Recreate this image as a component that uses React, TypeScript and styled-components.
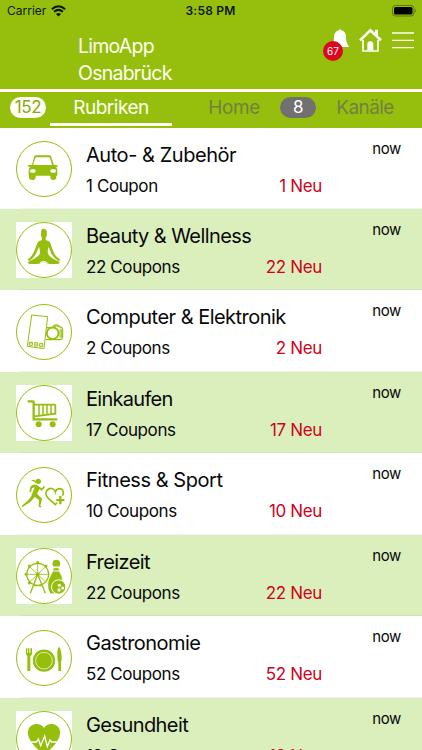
import React from 'react';
import styled, { createGlobalStyle } from 'styled-components';

const GREEN = '#96bf0d';
const RED = '#d0021b';

const Global = createGlobalStyle`
  * { box-sizing: border-box; }
  html, body { margin: 0; padding: 0; background: #fff; overflow: hidden; }
  body { font-family: Inter, "Liberation Sans", sans-serif; color: #080808; }
`;

const Screen = styled.div`
  width: 422px;
  height: 750px;
  overflow: hidden;
  display: flex;
  flex-direction: column;
  background: #fff;
`;

const Header = styled.header`
  flex: none;
  height: 89px;
  background: ${GREEN};
  display: flex;
  flex-direction: column;
`;

const StatusBar = styled.div`
  height: 22px;
  padding: 0 5px 0 7px;
  display: grid;
  grid-template-columns: 1fr auto 1fr;
  align-items: center;
  color: #10150a;
  font-size: 12px;
  line-height: 22px;
`;

const Carrier = styled.div`
  display: flex;
  align-items: center;
  gap: 5px;
  letter-spacing: 0;
`;

const Clock = styled.div`
  font-weight: 600;
  letter-spacing: 0.2px;
  margin-right: 3px;
`;

const Battery = styled.svg`
  justify-self: end;
  display: block;
`;

const TitleBar = styled.div`
  flex: 1;
  display: flex;
  justify-content: space-between;
  padding: 11px 8px 0 78px;
`;

const AppTitle = styled.h1`
  margin: 0;
  font-size: 19.5px;
  line-height: 27px;
  font-weight: 400;
  letter-spacing: -0.75px;
  color: #fffff2;
`;

const Actions = styled.div`
  display: flex;
  align-items: flex-start;
`;

const BellButton = styled.div`
  position: relative;
  width: 30px;
  height: 36px;
  margin-top: -5px;
`;

const BellBadge = styled.span`
  position: absolute;
  left: 0;
  top: 13px;
  width: 20px;
  height: 20px;
  border-radius: 50%;
  background: #dc0720;
  color: #fff;
  font-size: 10px;
  line-height: 20px;
  text-align: center;
`;

const ActionIcon = styled.svg<{ $left: number; $top: number }>`
  display: block;
  margin-left: ${(p) => p.$left}px;
  margin-top: ${(p) => p.$top}px;
`;

const Tabs = styled.nav`
  flex: none;
  height: 38.5px;
  border-top: 3px solid #fffff6;
  background: ${GREEN};
  display: flex;
  padding-left: 10px;
`;

const Pill = styled.span<{ $dark?: boolean; $left?: number }>`
  width: 36px;
  height: 21px;
  margin: 5px 0 0 ${(p) => p.$left ?? 0}px;
  border-radius: 11px;
  background: ${(p) => (p.$dark ? '#717171' : '#fffff4')};
  color: ${(p) => (p.$dark ? '#fff' : '#86a81b')};
  font-size: 17px;
  line-height: 21px;
  text-align: center;
  letter-spacing: -0.3px;
`;

const Tab = styled.span<{ $active?: boolean; $width: number; $left: number; $ls: number }>`
  width: ${(p) => p.$width}px;
  height: 34px;
  margin-left: ${(p) => p.$left}px;
  border-bottom: 3px solid ${(p) => (p.$active ? '#fffff4' : 'transparent')};
  color: ${(p) => (p.$active ? '#fffff2' : '#75803f')};
  font-size: 19px;
  line-height: 31px;
  text-align: center;
  letter-spacing: ${(p) => p.$ls}px;
`;

const List = styled.main`
  flex: 1;
  min-height: 0;
  overflow: hidden;
`;

const Row = styled.article<{ $tinted: boolean }>`
  height: 81.45px;
  padding: 13.5px 21px 0 16px;
  display: grid;
  grid-template-columns: 56px 236px 1fr;
  column-gap: 14px;
  background: linear-gradient(rgba(90, 110, 80, 0.09), rgba(90, 110, 80, 0.09)) 21px 100% / 100% 1px no-repeat
    ${(p) => (p.$tinted ? '#dbefbd' : '#fff')};
`;

const IconTile = styled.svg`
  display: block;
  width: 56px;
  height: 56px;
  background: #fff;
`;

const Info = styled.div`
  display: flex;
  flex-direction: column;
  padding-top: 0.5px;
`;

const RowTitle = styled.h2<{ $ls: number }>`
  margin: 0;
  font-size: 20px;
  line-height: 27px;
  font-weight: 400;
  white-space: nowrap;
  letter-spacing: ${(p) => p.$ls}px;
`;

const Counts = styled.div`
  display: flex;
  justify-content: space-between;
  margin-top: 5px;
  font-size: 17px;
  line-height: 24px;
  letter-spacing: -0.4px;
`;

const NewCount = styled.span`
  color: ${RED};
  letter-spacing: -0.35px;
`;

const Time = styled.time`
  justify-self: end;
  margin-top: -2.4px;
  font-size: 15px;
  line-height: 20px;
  letter-spacing: -0.4px;
`;

const Car = () => (
  <g>
    <path fillRule="evenodd" d="M55 45 Q57 43 60 43 H100 Q104 43 106 47 L113 71 L125 73 Q127 78 121 79 Q125 84 124 92 V104 H121 V112 Q120 117 111 117 Q104 117 103 110 V104 H59 V110 Q58 117 49 117 Q40 117 39 111 V104 H38 V91 Q37 84 42 79 Q34 78 35 73 L48 71 Z M58 50 L51 72 H108 L102 50 Q101 49 99 49 H61 Q59 49 58 50 Z" />
    <rect x="42" y="85" width="17" height="10" rx="5" fill="#fff" />
    <rect x="103" y="85" width="17" height="10" rx="5" fill="#fff" />
  </g>
);

const Yoga = () => (
  <g>
    <path d="M76 25 Q77 20 83 20 Q90 20 91 26 Q95 28 92 32 Q94 43 89 48 V54 L97 57 Q102 59 104 66 L110 84 Q116 101 127 109 L133 113 Q132 117 127 116 Q112 108 105 93 L98 74 Q95 83 95 91 Q97 102 109 109 L130 119 Q133 126 120 126 H103 Q92 125 83 119 Q75 125 63 126 H46 Q33 126 37 119 L57 109 Q70 102 72 92 Q72 84 69 74 L61 93 Q54 108 40 117 Q36 116 35 112 L41 108 Q51 98 56 85 L63 66 Q65 59 70 57 L78 54 V48 Q73 43 75 33 Z" />
    <path d="M72 122 Q83 113 94 122" stroke="#fff" strokeWidth="3" fill="none" />
  </g>
);

const Computer = () => (
  <g fill="none" stroke={GREEN} strokeWidth="3">
    <path d="M88 71 L110 71 L112 66 Q123 58 130 68 L136 70 Q140 73 140 79 V100 Q140 106 134 107 L90 107" strokeWidth="3.5" />
    <path d="M115 69 Q121 63 127 69" />
    <rect x="132" y="76" width="4" height="25" rx="2" />
    <circle cx="110" cy="88" r="17.5" strokeWidth="5.5" fill="#fff" />
    <path d="M47 33 L95 38 L84 134 L34 127 Z" fill="#fff" />
    <path d="M40 115 h9 v9 h-9z M56 116 h9 v10 h-9z M71 118 h9 v10 h-9z" />
    <path d="M43 119 h3 M59 121 h3 M74 123 h3" />
  </g>
);

const Cart = () => (
  <g fill="none" stroke={GREEN}>
    <path d="M35 49 H50 Q53 49 53 52 V103 H124" strokeWidth="7" />
    <path d="M54 59 H116 Q118 59 118 62 V86 L55 94" strokeWidth="5.5" />
    <path d="M69 59 V92 M81 59 V91 M93 59 V89 M105 59 V88" strokeWidth="4.5" />
    <g fill={GREEN} stroke="none">
      <circle cx="68" cy="118" r="9" />
      <circle cx="110" cy="118" r="9" />
    </g>
  </g>
);

const Runner = () => (
  <g>
    <circle cx="67" cy="43" r="8" />
    <path d="M45 43 Q49 35 56 40 Q62 44 66 42 L60 49 Q52 40 45 43 Z" />
    <path d="M61 53 Q53 50 44 58 L40 73 Q41 77 45 74 L48 64 L56 61 L45 89 L35 101 L17 117 Q17 120 21 119 L44 104 L56 90 L69 99 L68 116 Q68 121 77 121 Q77 118 73 116 L78 96 Q78 93 74 91 L63 80 L71 66 L77 72 L87 61 Q87 57 83 58 L77 64 Z" />
    <path d="M123 107 L118 113 Q106 102 97 94 Q87 83 91 73 Q98 61 110 65 Q116 67 118 75 Q121 66 129 65 Q140 65 142 75 Q143 80 139 86" fill="none" stroke={GREEN} strokeWidth="5" />
    <path d="M133 87 V112 M121 99.5 H145" stroke={GREEN} strokeWidth="7" />
  </g>
);

const Leisure = () => (
  <g>
    <g fill="none" stroke={GREEN}>
      <circle cx="65" cy="79" r="33" strokeWidth="3.5" />
      <path d="M65 79 V44 M65 79 L91 54 M65 79 H101 M65 79 L91 104 M65 79 L39 54 M65 79 H29 M65 79 L39 104" strokeWidth="2.5" />
      <path d="M63 84 L43 136 M67 84 L88 136 M54 113 H76" strokeWidth="4" />
    </g>
    <circle cx="65" cy="79" r="6" />
    <circle cx="65" cy="44" r="5" />
    <circle cx="90" cy="54" r="4.5" />
    <circle cx="40" cy="54" r="4.5" />
    <circle cx="30" cy="79" r="4.5" />
    <circle cx="40" cy="105" r="4.5" />
    <circle cx="121" cy="47" r="11.5" />
    <path d="M113 56 H129 Q129 66 131 72 Q141 84 139 104 L128 137 H102 Q87 108 104 82 Q112 70 113 56 Z" stroke="#fff" strokeWidth="2" />
    <path d="M110 59 H132 M106 69 H135" stroke="#fff" strokeWidth="3" />
    <circle cx="128" cy="117" r="21.5" stroke="#fff" strokeWidth="3" />
    <circle cx="130" cy="112" r="4.5" fill="#fff" />
    <circle cx="140" cy="120" r="4.5" fill="#fff" />
    <circle cx="129" cy="126" r="5" fill="#fff" />
  </g>
);

const Dining = () => (
  <g>
    <circle cx="84" cy="92" r="33.5" />
    <circle cx="84" cy="92" r="25" fill="none" stroke="#fff" strokeWidth="2" />
    <path d="M30 55 H34 V69 H36 V55 H39 V69 H41 V55 H44 V69 H45 V55 H48 V71 Q47 77 43 78 V123 H34 V78 Q30 75 30 70 Z" />
    <path d="M124 78 Q123 54 130 50 Q137 61 137 88 L135 97 V123 H127 V96 Q124 93 124 78 Z" />
  </g>
);

const Health = () => (
  <g>
    <path d="M84 51 Q92 38 109 39 Q128 42 132 59 Q135 76 122 94 Q108 113 84 130 Q60 113 46 94 Q33 76 36 59 Q40 42 59 39 Q76 38 84 51 Z" />
    <path d="M36 93 H61 L67 84 L74 104 L86 75 L94 107 L102 87 L107 93 H132" fill="none" stroke="#fff" strokeWidth="4" />
  </g>
);

const rows: { title: string; ls: number; coupons: string; fresh: string; Icon: React.FC }[] = [
  { title: 'Auto- & Zubehör', ls: -0.45, coupons: '1 Coupon', fresh: '1 Neu', Icon: Car },
  { title: 'Beauty & Wellness', ls: -0.57, coupons: '22 Coupons', fresh: '22 Neu', Icon: Yoga },
  { title: 'Computer & Elektronik', ls: -0.52, coupons: '2 Coupons', fresh: '2 Neu', Icon: Computer },
  { title: 'Einkaufen', ls: -0.72, coupons: '17 Coupons', fresh: '17 Neu', Icon: Cart },
  { title: 'Fitness & Sport', ls: -0.46, coupons: '10 Coupons', fresh: '10 Neu', Icon: Runner },
  { title: 'Freizeit', ls: -0.6, coupons: '22 Coupons', fresh: '22 Neu', Icon: Leisure },
  { title: 'Gastronomie', ls: -0.53, coupons: '52 Coupons', fresh: '52 Neu', Icon: Dining },
  { title: 'Gesundheit', ls: -0.57, coupons: '19 Coupons', fresh: '19 Neu', Icon: Health },
];

export default function App() {
  return (
    <Screen>
      <Global />
      <Header>
        <StatusBar>
          <Carrier>
            Carrier
            <svg width="15" height="12" viewBox="0 0 15 12" fill="none" stroke="#10150a" strokeWidth="2">
              <path d="M0.8 4.2 Q7.5 -1.8 14.2 4.2" />
              <path d="M3.1 6.8 Q7.5 3 11.9 6.8" />
              <path d="M5 8.9 Q7.5 7 10 8.9 L7.5 11.4 Z" fill="#10150a" stroke="none" />
            </svg>
          </Carrier>
          <Clock>3:58 PM</Clock>
          <Battery width="25" height="12" viewBox="0 0 25 12">
            <rect x="0.5" y="0.5" width="21.5" height="10.5" rx="3" fill="none" stroke="#5c7510" />
            <rect x="2" y="2" width="18.5" height="7.5" rx="1.6" fill="#000" />
            <path d="M23.2 4 Q25.4 5.8 23.2 7.6 Z" fill="#5c7510" />
          </Battery>
        </StatusBar>
        <TitleBar>
          <AppTitle>
            LimoApp
            <br />
            Osnabrück
          </AppTitle>
          <Actions>
            <BellButton>
              <ActionIcon $left={7} $top={0.5} width="20" height="20" viewBox="0 0 60 60">
                <path d="M26 4 Q30 -2 34 4 Q48 7 48 25 Q48 43 58 54 H2 Q12 43 12 25 Q12 8 26 4 Z" fill="#fff" />
              </ActionIcon>
              <BellBadge>67</BellBadge>
            </BellButton>
            <ActionIcon $left={6} $top={-5} width="23" height="24" viewBox="0 0 69 72">
              <path d="M3 37 L34 7 L66 37" fill="none" stroke="#fff" strokeWidth="8" />
              <path d="M48 5 H57 V24 L48 16 Z" fill="#fff" />
              <path d="M12 35 V69 H57 V35" fill="none" stroke="#fff" strokeWidth="5" />
              <path d="M25 67 V48 Q25 40 34 40 Q43 40 43 48 V67 Z" fill="#fff" />
            </ActionIcon>
            <ActionIcon $left={10} $top={-1} width="22" height="17" viewBox="0 0 22 17">
              <path d="M0 1 H22 M0 8.3 H22 M0 15.6 H22" stroke="#fffff0" strokeWidth="1.3" />
            </ActionIcon>
          </Actions>
        </TitleBar>
      </Header>
      <Tabs>
        <Pill>152</Pill>
        <Tab $active $left={4} $width={122} $ls={-0.5}>Rubriken</Tab>
        <Tab $left={32} $width={60} $ls={-0.4}>Home</Tab>
        <Pill $dark $left={16}>8</Pill>
        <Tab $left={14} $width={70} $ls={-0.6}>Kanäle</Tab>
      </Tabs>
      <List>
        {rows.map(({ title, ls, coupons, fresh, Icon }, i) => (
          <Row key={title} $tinted={i % 2 === 1}>
            <IconTile viewBox="0 0 168 168" fill={GREEN}>
              <circle cx="84" cy="84" r="82.5" fill="#fff" stroke={GREEN} strokeWidth="3" />
              <Icon />
            </IconTile>
            <Info>
              <RowTitle $ls={ls}>{title}</RowTitle>
              <Counts>
                <span>{coupons}</span>
                <NewCount>{fresh}</NewCount>
              </Counts>
            </Info>
            <Time>now</Time>
          </Row>
        ))}
      </List>
    </Screen>
  );
}
